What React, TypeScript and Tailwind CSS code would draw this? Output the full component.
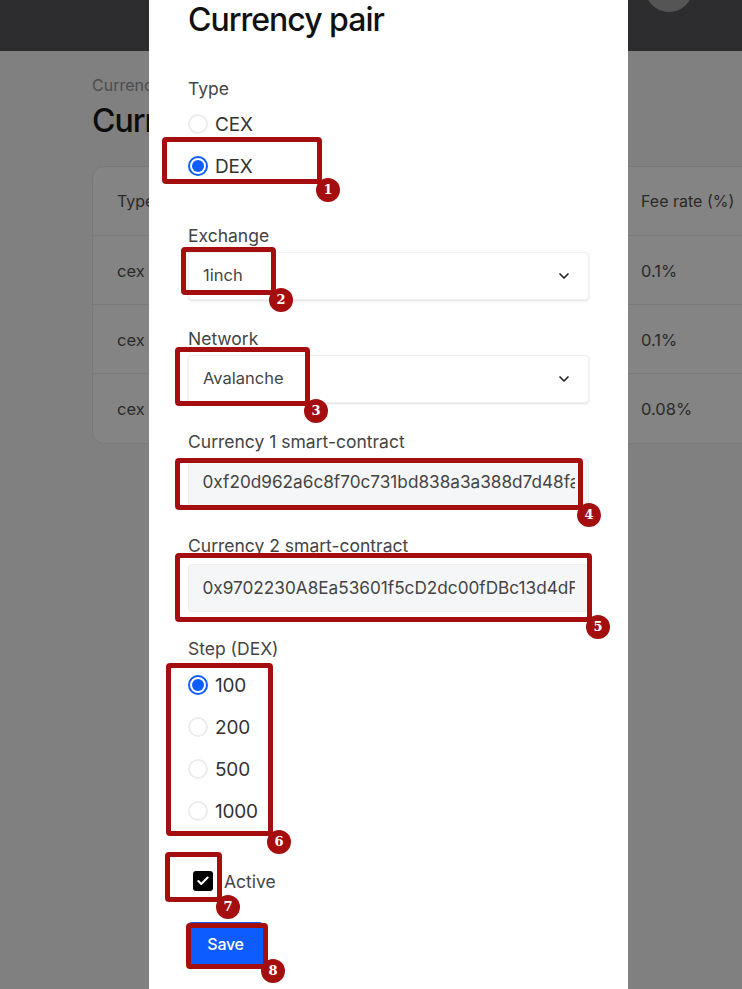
import React from "react";
import { ChevronDown, Check } from "lucide-react";

const font = { fontFamily: "Inter, 'Liberation Sans', sans-serif" };

function Radio({ label, checked }: { label: string; checked?: boolean }) {
  return (
    <div className="flex h-6 items-center gap-[7px] text-[19px] tracking-[-0.2px] text-[#333]">
      <span
        className={`flex h-5 w-5 items-center justify-center rounded-full border-2 bg-white ${
          checked ? "border-[#0d5cff]" : "border-[#ececec]"
        }`}
      >
        {checked && <span className="h-3 w-3 rounded-full bg-[#0d5cff]" />}
      </span>
      <span className="pt-[2px]">{label}</span>
    </div>
  );
}

function Label({ children }: { children: React.ReactNode }) {
  return <div className="h-6 pt-px text-[17.5px] leading-6 text-[#444]">{children}</div>;
}

function SelectBox({ value }: { value: string }) {
  return (
    <div className="flex h-12 w-[401px] items-center justify-between rounded border border-[#f0f0f0] bg-white pb-[2px] pl-[14px] pr-4 text-[16.5px] text-[#444] shadow-sm">
      {value}
      <ChevronDown size={16} strokeWidth={2.5} className="mt-[2px] text-[#222]" />
    </div>
  );
}

function AddressInput({ value }: { value: string }) {
  return (
    <div className="flex h-12 w-[401px] items-center rounded border border-[#f0f0f0] bg-[#f5f6f7] px-[13.5px] text-[17.2px] text-[#444]">
      <span className="overflow-hidden whitespace-nowrap">{value}</span>
    </div>
  );
}

function Field({ label, className, children }: { label: string; className: string; children: React.ReactNode }) {
  return (
    <div className={`flex flex-col ${className}`}>
      <Label>{label}</Label>
      {children}
    </div>
  );
}

function Badge({ n, className }: { n: number; className: string }) {
  return (
    <span
      className={`absolute flex h-6 w-6 items-center justify-center rounded-full bg-[#a50e0e] text-[13px] font-bold text-white ${className}`}
      style={{ fontFamily: "'DejaVu Serif', serif" }}
    >
      {n}
    </span>
  );
}

const box = "absolute rounded-sm border-[5px] border-[#a50e0e]";

export default function App() {
  return (
    <div className="relative h-[989px] w-[742px] overflow-hidden bg-[#808080]" style={font}>
      {/* Page behind the dialog */}
      <header className="relative h-[51px] bg-[#2d2d2f]">
        <span className="absolute left-[645px] top-[-36px] h-12 w-12 rounded-full bg-[#555]" />
      </header>
      <main className="flex flex-col pl-[92px] pt-[22px]">
        <div className="h-6 text-base leading-6 text-[#4d4d4d]">Currency pairs</div>
        <h2 className="mt-1 h-10 text-[32px] font-medium leading-10 tracking-[-1px] text-[#0c0c0c]">Currency pairs</h2>
        <div className="mt-[25px] h-[278px] w-[720px] rounded-xl border border-[#797979] bg-[#848484] text-[#2a2a2a]">
          {[
            ["Type", "Fee rate (%)"],
            ["cex", "0.1%"],
            ["cex", "0.1%"],
            ["cex", "0.08%"],
          ].map(([a, b], i) => (
            <div
              key={i}
              className={`flex h-[69px] items-center pl-[24px] ${i < 3 ? "border-b border-[#7a7a7a]" : ""} ${
                i === 0 ? "text-base" : "pt-[2px] text-[16.5px]"
              }`}
            >
              <span className="w-[524px]">{a}</span>
              <span>{b}</span>
            </div>
          ))}
        </div>
      </main>

      {/* Dialog */}
      <section className="absolute left-[149px] top-0 flex h-[989px] w-[479px] flex-col bg-white pl-[39px]">
        <h1 className="h-10 text-[32px] font-medium leading-10 tracking-[-1px] text-[#111]">Currency pair</h1>
        <form className="mt-9 flex flex-col gap-[26px]">
          <div className="flex flex-col gap-3 pb-[19px]">
            <Label>Type</Label>
            <div className="flex flex-col gap-[18px]">
              <Radio label="CEX" />
              <Radio label="DEX" checked />
            </div>
          </div>
          <Field label="Exchange" className="gap-[5px]">
            <SelectBox value="1inch" />
          </Field>
          <Field label="Network" className="gap-[5px]">
            <SelectBox value="Avalanche" />
          </Field>
          <Field label="Currency 1 smart-contract" className="gap-[5px]">
            <AddressInput value="0xf20d962a6c8f70c731bd838a3a388d7d48fa6e15" />
          </Field>
          <Field label="Currency 2 smart-contract" className="mt-px gap-[7px]">
            <AddressInput value="0x9702230A8Ea53601f5cD2dc00fDBc13d4dF4A8c7" />
          </Field>
          <Field label="Step (DEX)" className="-mt-[2px] gap-[13px]">
            <div className="flex flex-col gap-[18px]">
              <Radio label="100" checked />
              <Radio label="200" />
              <Radio label="500" />
              <Radio label="1000" />
            </div>
          </Field>
          <div className="flex flex-col items-start gap-[29px] pt-5">
            <div className="ml-[5px] flex h-6 items-center gap-[11px] text-[17.5px] text-[#444]">
              <span className="flex h-5 w-5 items-center justify-center rounded-[3px] bg-black">
                <Check size={14} strokeWidth={3.5} className="text-white" />
              </span>
              <span className="pt-[2px]">Active</span>
            </div>
            <button type="button" className="h-[46px] w-[75px] rounded bg-[#0d5cff] pb-[2px] text-base font-medium tracking-[-0.3px] text-white">
              Save
            </button>
          </div>
        </form>
      </section>

      {/* Tutorial annotations */}
      <div className={`${box} left-[162px] top-[137px] h-[47px] w-[160px]`} />
      <Badge n={1} className="left-[316px] top-[178px]" />
      <div className={`${box} left-[181px] top-[247px] h-[48px] w-[95px]`} />
      <Badge n={2} className="left-[269px] top-[288px]" />
      <div className={`${box} left-[175px] top-[347px] h-[59px] w-[135px]`} />
      <Badge n={3} className="left-[304px] top-[399px]" />
      <div className={`${box} left-[175px] top-[458px] h-[52px] w-[408px]`} />
      <Badge n={4} className="left-[577px] top-[503px]" />
      <div className={`${box} left-[175px] top-[553px] h-[69px] w-[417px]`} />
      <Badge n={5} className="left-[586px] top-[615px]" />
      <div className={`${box} left-[166px] top-[663px] h-[173px] w-[107px]`} />
      <Badge n={6} className="left-[267px] top-[830px]" />
      <div className={`${box} left-[165px] top-[852px] h-[50px] w-[57px]`} />
      <Badge n={7} className="left-[216px] top-[895px]" />
      <div className={`${box} left-[186px] top-[923px] h-[46px] w-[82px]`} />
      <Badge n={8} className="left-[261px] top-[959px]" />
    </div>
  );
}
